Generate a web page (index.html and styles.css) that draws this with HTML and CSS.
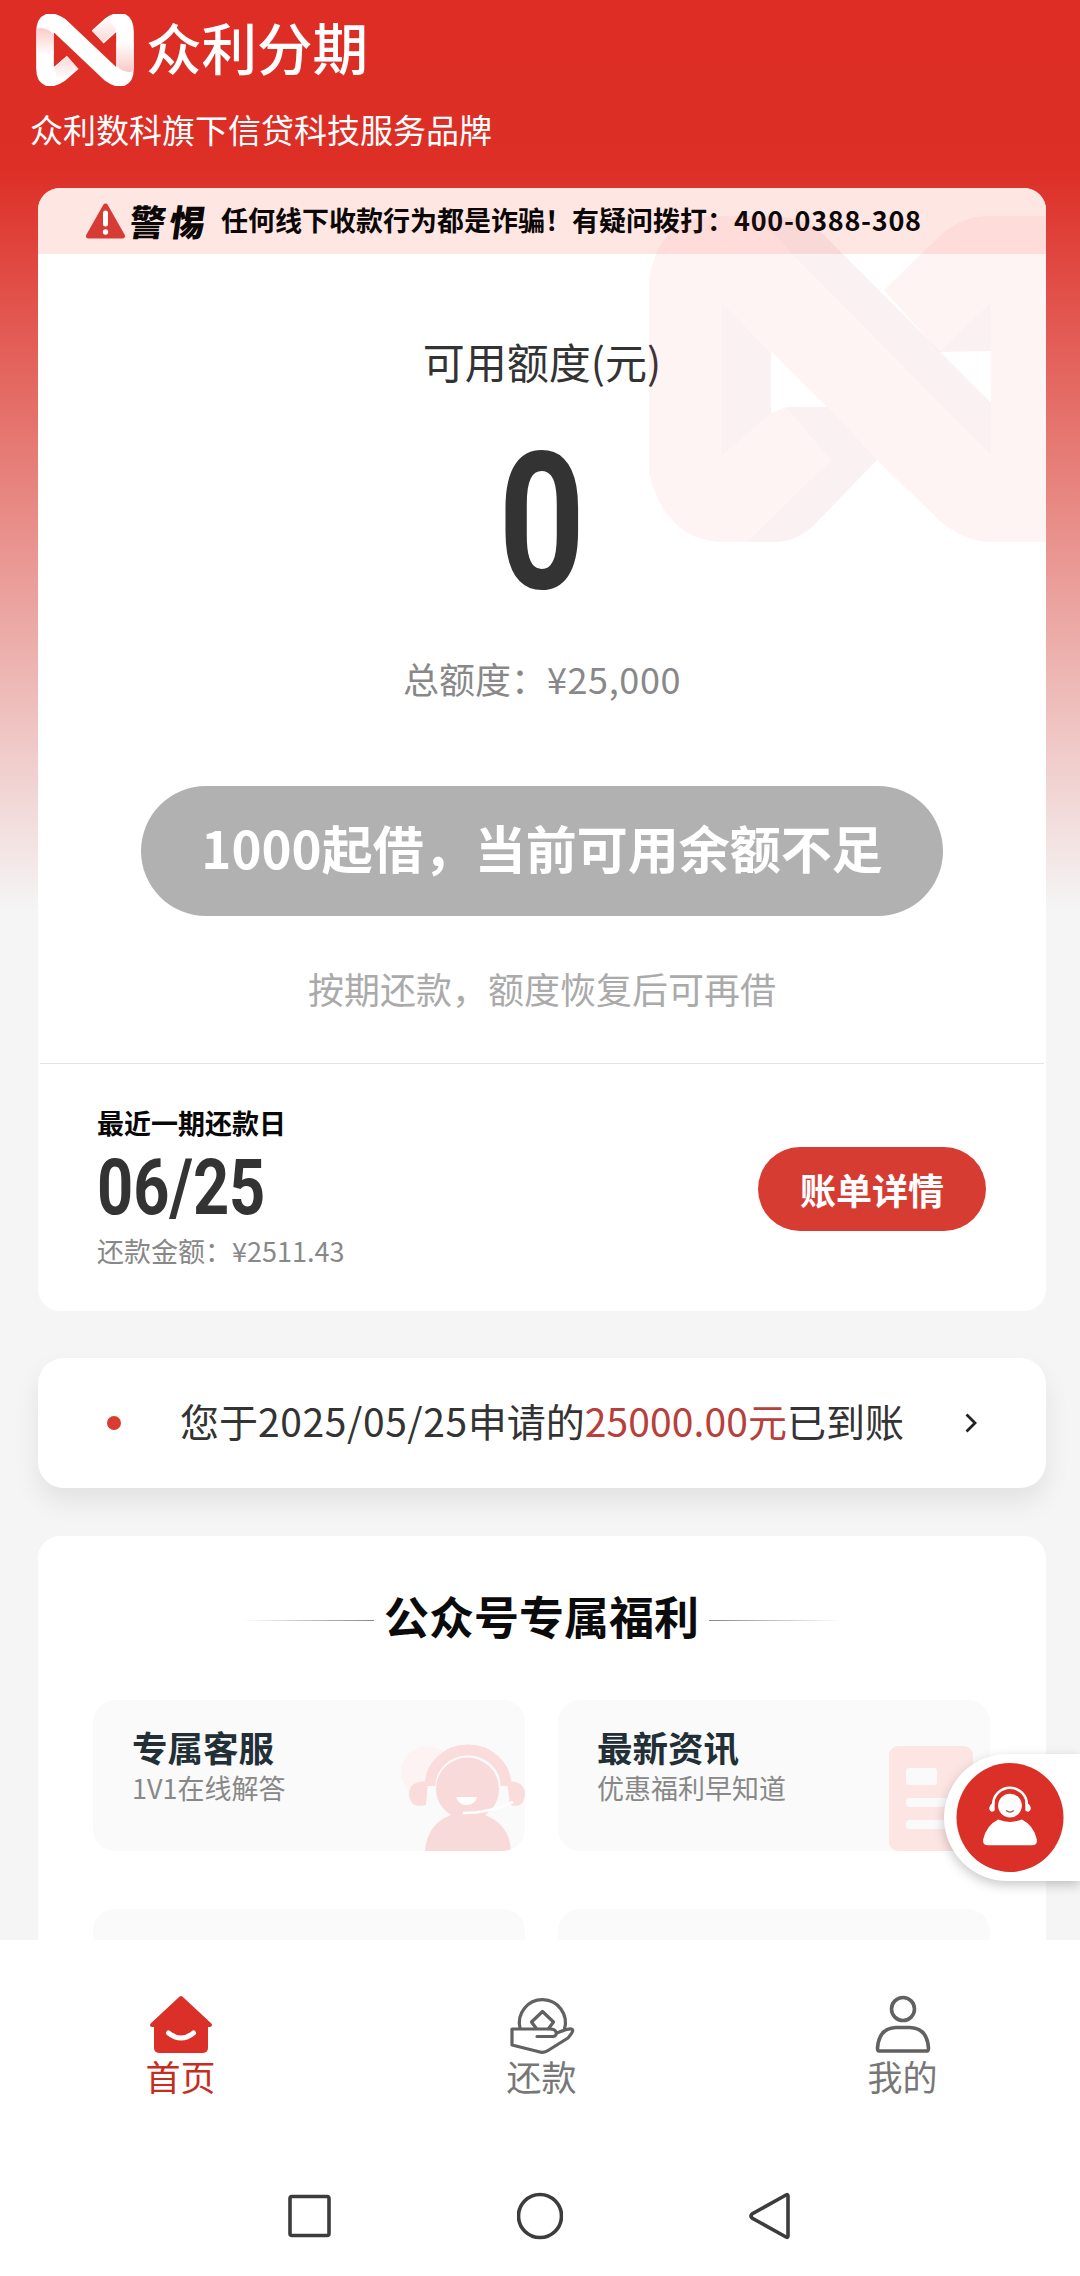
FILE: index.html
```html
<!DOCTYPE html>
<html lang="zh-CN">
<head>
<meta charset="utf-8">
<title>众利分期</title>
<link rel="stylesheet" href="styles.css">
</head>
<body>
<div class="app">
  <main class="content">
    <header class="brand">
      <div class="brand-row">
        <svg class="brand-logo" viewBox="33 27 294 216" preserveAspectRatio="none">
          <defs>
            <linearGradient id="foldL" x1="0" y1="0" x2="0" y2="1"><stop offset="0" stop-color="#f6a9a5"/><stop offset="1" stop-color="#fff"/></linearGradient>
            <linearGradient id="foldR" x1="0" y1="1" x2="0" y2="0"><stop offset="0" stop-color="#f8bcb9"/><stop offset="1" stop-color="#fff"/></linearGradient>
          </defs>
          <path d="M143 172 L104 206 Q60 236 60 190 V82 Q60 32 106 64 L256 206 Q300 238 300 190 V82 Q300 32 258 60 L218 96" fill="none" stroke="#fff" stroke-width="53"/>
          <path d="M34 72 Q60 62 86 88 V150 H34Z" fill="url(#foldL)" opacity=".6"/>
          <path d="M326 198 Q300 208 274 182 V110 H326Z" fill="url(#foldR)" opacity=".8"/>
          <path d="M200 78 L234 112 L274 76 L250 38Z" fill="url(#foldR)" opacity=".6"/>
          <path d="M127 153 L87 190 L98 225 L161 192Z" fill="url(#foldL)" opacity=".45"/>
        </svg>
        <h1 class="brand-name">众利分期</h1>
      </div>
      <p class="tagline">众利数科旗下信贷科技服务品牌</p>
    </header>

    <section class="card quota">
      <div class="alert">
        <svg class="alert-icon" viewBox="0 0 40 36"><path d="M20 3 L37 33 H3Z" fill="#d63c35" stroke="#d63c35" stroke-width="5" stroke-linejoin="round"/><path d="M20 10 V21" stroke="#fff" stroke-width="5" stroke-linecap="round"/><circle cx="20" cy="29" r="2.7" fill="#fff"/></svg>
        <strong class="alert-word">警惕</strong>
        <span class="alert-text">任何线下收款行为都是诈骗！有疑问拨打：<span class="phone">400-0388-308</span></span>
      </div>
      <svg class="watermark" viewBox="0 0 397 326">
        <path class="wm-light" d="M0 64 Q10 0 66 0 H90 Q118 6 142 37 L342 239 V87 L290 136 L235 74 L294 17 Q315 0 339 0 H397 V326 H340 Q312 324 290 304 L228 244 L173 186 L73 87 V239 L122 197 L137 191 L182 244 L98 326 H70 Q15 322 0 256Z"/>
        <path class="wm-dark" d="M90 0 H125 Q155 2 173 17 L342 187 V239 L142 37 Q118 6 90 0Z"/>
        <path class="wm-dark" d="M73 87 L122 136 V197 L73 239Z"/>
        <path class="wm-dark" d="M137 191 H178 L228 244 L165 309 Q148 326 125 326 H98 L182 244Z"/>
        <path class="wm-dark" d="M290 136 L342 87 V135Z"/>
      </svg>
      <div class="quota-body">
        <h2 class="quota-title">可用额度(元)</h2>
        <div class="quota-value"><span>0</span></div>
        <p class="quota-total">总额度：<span class="num">¥25,000</span></p>
        <button class="borrow">1000起借，当前可用余额不足</button>
        <p class="quota-tip">按期还款，额度恢复后可再借</p>
      </div>
      <div class="bill">
        <div class="bill-info">
          <p class="bill-label">最近一期还款日</p>
          <div class="bill-date"><span>06/25</span></div>
          <p class="bill-amount">还款金额：<span class="num">¥2511.43</span></p>
        </div>
        <button class="bill-btn">账单详情</button>
      </div>
    </section>

    <section class="card notice">
      <i class="dot"></i>
      <p class="notice-text">您于<span class="date">2025/05/25</span>申请的<em>25000.00元</em>已到账</p>
      <svg class="chevron" viewBox="0 0 12 20"><path d="M1.5 1.5 L10 10 L1.5 18.5" fill="none" stroke="#222" stroke-width="2.8"/></svg>
    </section>

    <section class="card benefits">
      <div class="benefits-head"><i class="rule left"></i><h2>公众号专属福利</h2><i class="rule right"></i></div>
      <div class="grid">
        <article class="tile">
          <h3>专属客服</h3><p>1V1在线解答</p>
          <svg class="tile-art agent" viewBox="0 0 125 111">
            <circle cx="27" cy="32" r="26" fill="#fdf3f3"/>
            <circle cx="67.5" cy="49" r="44" fill="#fbfafa"/>
            <path d="M30 46 A38 36 0 0 1 106 46" fill="none" stroke="#fbdcdc" stroke-width="11"/>
            <path d="M28 41 Q9 41 9 54 Q10 69 26 65Z M107 41 Q125 41 125 54 Q124 69 110 65Z" fill="#fbdcdc"/>
            <path d="M25 111 Q27 84 51 75 Q36 65 36 49 A31.5 31.5 0 0 1 99 49 Q99 65 85 75 Q110 85 111 111Z" fill="#f8dadb"/>
            <path d="M56 57 H77 Q75 65 66 65 Q59 65 56 57Z" fill="#fff"/>
            <path d="M63 73 Q90 73 113 62" fill="none" stroke="#fff" stroke-width="2.5"/>
          </svg>
        </article>
        <article class="tile">
          <h3>最新资讯</h3><p>优惠福利早知道</p>
          <svg class="tile-art doc" viewBox="0 0 84 105"><rect width="84" height="105" rx="9" fill="#fde5e4"/><rect x="17" y="22" width="31" height="17" rx="3" fill="#fafafa"/><rect x="17" y="52" width="50" height="9" rx="4" fill="#fafafa"/><rect x="17" y="74" width="50" height="9" rx="4" fill="#fafafa"/></svg>
        </article>
        <article class="tile"></article>
        <article class="tile"></article>
      </div>
    </section>

    <aside class="service">
      <svg class="service-icon" viewBox="0 0 108 110"><ellipse cx="54" cy="55" rx="54" ry="55" fill="#db3027"/>
        <path d="M37 42 A17 17 0 0 1 71 42" fill="none" stroke="#fff" stroke-width="2.6"/>
        <path d="M38 39 Q33 43 33.500 46 Q34 50 38 48Z M70 39 Q75 43 74.500 46 Q74 50 70 48Z" fill="#fff" stroke="#fff"/>
        <circle cx="54" cy="43" r="12" fill="#fff"/><path d="M50 48 Q54 51 58 48" fill="none" stroke="#9b5b57" stroke-width="1.300"/>
        <path d="M42 57 Q54 62 66 57 Q78 63 81 77 Q82 83 76 83 H32 Q26 83 27 77 Q30 63 42 57Z" fill="#fff"/>
      </svg>
    </aside>
  </main>

  <nav class="tabs">
    <a class="tab active">
      <svg viewBox="0 0 66 60"><path d="M33 3 L62 30 H4Z" fill="#db3027" stroke="#db3027" stroke-width="4" stroke-linejoin="round"/><path d="M6 26 H60 V53 Q60 58 54 58 H12 Q6 58 6 53Z" fill="#db3027"/><path d="M20.500 38 Q33 48 45.500 38" fill="none" stroke="#fff" stroke-width="5" stroke-linecap="round"/></svg>
      <span>首页</span>
    </a>
    <a class="tab">
      <svg viewBox="0 0 66 60"><g fill="none" stroke="#616161" stroke-width="3.200" stroke-linejoin="round" stroke-linecap="round"><path d="M11 33 A23 23 0 1 1 55.500 34"/><path d="M27 33 L22.500 27 L33.500 16.500 L44.500 27 L40 33"/><path d="M28 41.500 H44 Q48 41 47 37 Q46 34 41 34 H3 V50 L29 56.500 Q35 58.500 39 55.500 L59 43 Q66 35 62.500 34 Q59 33.500 48 38"/></g></svg>
      <span>还款</span>
    </a>
    <a class="tab">
      <svg viewBox="0 0 66 60"><g fill="none" stroke="#616161" stroke-width="3.600" stroke-linejoin="round"><circle cx="33" cy="14" r="11.500"/><path d="M9 56 Q7.500 56 7.500 53 Q9 33 26 32.500 H40 Q57 33 58.500 53 Q58.500 56 57 56Z"/></g></svg>
      <span>我的</span>
    </a>
  </nav>

  <footer class="sysnav">
    <svg viewBox="0 0 46 48"><rect x="3" y="4.500" width="39" height="39" rx="2" /></svg>
    <svg viewBox="0 0 46 48"><circle cx="23" cy="24" r="21.500"/></svg>
    <svg viewBox="0 0 46 48"><path d="M41 4 V44 Q41 46 39 45 L5 26 Q3 24 5 22 L39 3 Q41 2 41 4Z"/></svg>
  </footer>
</div>
</body>
</html>
```
FILE: styles.css
```css
* { box-sizing: border-box; margin: 0; padding: 0; }
body {
  width: 1080px;
  font-family: "Noto Sans CJK SC", "Noto Sans", sans-serif;
  font-weight: 400;
  color: #333;
  background: #fdfdfd;
}
h1, h2, h3 { font-weight: 700; }
button { border: 0; font-family: inherit; color: #fff; }
em { font-style: normal; }
.app { display: flex; flex-direction: column; height: 2276px; overflow: hidden; }

.content {
  position: relative;
  flex: none;
  height: 1940px;
  overflow: hidden;
  padding: 0 34px 0 38px;
  background: linear-gradient(#dd2d24 0, #dd2f26 170px, #f5f5f5 910px);
}
.brand { height: 188px; margin-left: -8px; padding-top: 14px; }
.brand-row { display: flex; align-items: center; gap: 12px; height: 72px; padding-left: 6px; }
.brand-logo { width: 98px; height: 72px; }
.brand-name { font-size: 55.5px; line-height: 72px; font-weight: 500; color: #fff; margin-top: -8px; }
.tagline { margin-top: 20px; font-size: 33px; line-height: 46px; color: #fff; white-space: nowrap; }

.card { position: relative; background: #fff; border-radius: 22px; }
.quota { height: 1123px; overflow: hidden; }
.alert {
  display: flex; align-items: center; height: 66px; padding-left: 47px;
  background: #fee6e3; color: #0c0808; white-space: nowrap;
}
.alert-icon { width: 41px; height: 36px; }
.alert-word { width: 80px; margin: -3px 0 0 4px; font-size: 36px; line-height: 50px; font-weight: 900; letter-spacing: 4px; transform: skewX(-8deg); }
.alert-text { margin: -3px 0 0 11px; font-size: 27px; line-height: 50px; font-weight: 700; }
.phone { letter-spacing: .7px; }
.watermark { position: absolute; z-index: 1; left: 611px; top: 28px; width: 397px; height: 326px; pointer-events: none; }
.wm-light { fill: rgba(250, 50, 50, .055); }
.wm-dark { fill: rgba(170, 50, 70, .07); }

.quota-body { display: flex; flex-direction: column; align-items: center; height: 809px; padding-top: 77px; }
.quota-body > * { flex: none; }
.quota-title { font-size: 42px; line-height: 60px; font-weight: 400; }
.quota-value { height: 140px; margin-top: 61px; font: 700 191px/142px Roboto, sans-serif; }
.quota-value span { display: block; transform: scaleX(.79); }
.quota-total { margin-top: 61px; font-size: 36px; line-height: 50px; color: #888; }
.quota-total .num { letter-spacing: .6px; }
.borrow { width: 802px; height: 130px; margin-top: 83px; border-radius: 65px; background: #b1b1b1; font-size: 51px; font-weight: 700; line-height: 120px; padding-bottom: 9px; }
.quota-tip { margin-top: 47px; font-size: 36px; line-height: 50px; color: #aaa; }

.bill { display: flex; justify-content: space-between; height: 248px; margin: 0 2px; padding: 41px 58px 0 57px; border-top: 1px solid #e4e4e4; }
.bill-label { font-size: 27px; line-height: 36px; font-weight: 700; color: #080808; }
.bill-date { height: 56px; margin-top: 19px; font: 700 77px/56px Roboto, sans-serif; }
.bill-date span { display: inline-block; transform: scaleX(.82); transform-origin: left; }
.bill-amount { margin-top: 17px; font-size: 27px; line-height: 36px; color: #888; }
.bill-btn { width: 228px; height: 84px; margin-top: 42px; border-radius: 42px; background: #d73c33; font-size: 36px; font-weight: 700; line-height: 84px; }

.notice { display: flex; align-items: center; height: 130px; margin-top: 47px; padding: 0 69px; border-radius: 26px; box-shadow: 0 14px 26px rgba(0, 0, 0, .08); }
.dot { width: 14px; height: 14px; border-radius: 50%; background: #d93c31; }
.notice-text { flex: 1; margin: -6px 0 0 59px; font-size: 39px; line-height: 60px; white-space: nowrap; }
.notice-text .date { letter-spacing: .6px; }
.notice-text em { color: #b8403c; letter-spacing: .1px; }
.chevron { width: 12px; height: 20px; }

.benefits { height: 440px; margin-top: 48px; padding: 45px 56px 0 55px; border-radius: 22px 22px 0 0; }
.benefits-head { display: flex; align-items: center; justify-content: center; gap: 10px; height: 70px; }
.benefits-head h2 { font-size: 45px; line-height: 64px; color: #0b0b0b; }
.rule { width: 132px; height: 1px; margin-top: 9px; }
.rule.left { background: linear-gradient(90deg, transparent, #888); }
.rule.right { background: linear-gradient(90deg, #888, transparent); }
.grid { display: grid; grid-template-columns: 432px 432px; column-gap: 33px; row-gap: 58px; margin-top: 49px; }
.tile { position: relative; height: 151px; padding: 24px 0 0 39px; border-radius: 22px; background: #fafafa; overflow: hidden; }
.tile h3 { font-size: 35.5px; line-height: 46px; color: #232f37; }
.tile p { font-size: 27px; line-height: 36px; color: #888; }
.tile-art { position: absolute; }
.agent { right: 0; bottom: 0; width: 125px; height: 111px; }
.doc { left: 331px; bottom: 0; width: 84px; height: 105px; }

.service { position: absolute; z-index: 3; right: 0; top: 1754px; width: 136px; height: 127px; padding: 9px 0 0 12px; border-radius: 64px 0 0 64px; background: #fff; box-shadow: 0 4px 12px rgba(0, 0, 0, .22); }
.service-icon { display: block; width: 108px; height: 109px; }

.tabs { flex: none; display: flex; height: 220px; margin-right: -3px; padding-top: 55px; background: #fff; }
.tab { flex: 1; display: flex; flex-direction: column; align-items: center; font-size: 35px; line-height: 48px; color: #777; }
.tab svg { width: 66px; height: 60px; margin-bottom: -3px; }
.tab.active { color: #c72d1f; }
.sysnav { display: flex; justify-content: center; gap: 184px; height: 116px; padding-top: 32px; background: #fff; }
.sysnav svg { width: 46px; height: 48px; fill: none; stroke: #3c3c3e; stroke-width: 3.6; }
```
